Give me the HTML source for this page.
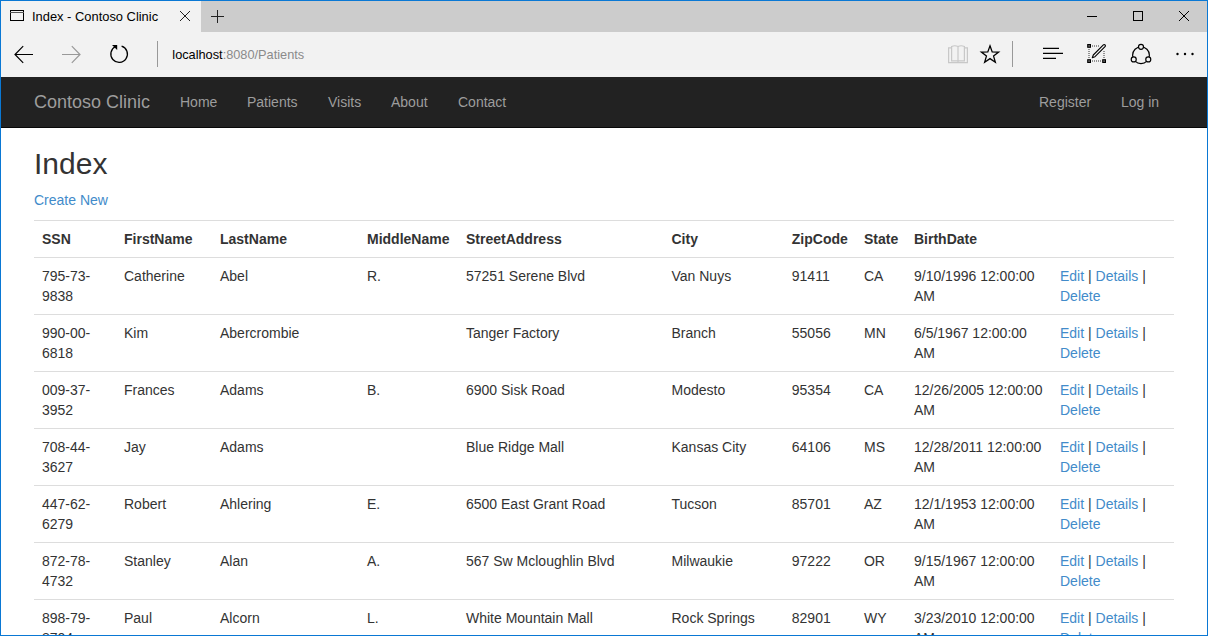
<!DOCTYPE html>
<html><head><meta charset="utf-8"><title>Index - Contoso Clinic</title>
<style>
html,body{margin:0;padding:0;width:1208px;height:636px;overflow:hidden;background:#fff;font-family:"Liberation Sans",sans-serif;}
.a{position:absolute;}
#frame{position:absolute;left:0;top:0;width:1206px;height:634px;border:1px solid #0A78D4;pointer-events:none;z-index:10}
#tabbar{left:1px;top:1px;width:1206px;height:31px;background:#CCCCCC}
#tab{left:1px;top:1px;width:200px;height:31px;background:#F2F2F2}
#addr{left:1px;top:32px;width:1206px;height:45px;background:#F2F2F2}
#nav{left:1px;top:77px;width:1206px;height:50px;background:#222;border-bottom:1px solid #080808}
.ui{font-size:12px;color:#000;white-space:nowrap}
.nl{font-size:14px;color:#9d9d9d;white-space:nowrap;line-height:20px}
#content{left:34px;top:127px;width:1140px;color:#333;font-size:14px;line-height:20px}
h2{position:absolute;left:0;top:20px;margin:0;font-size:30px;font-weight:500;line-height:33px;white-space:nowrap}
.create{position:absolute;left:0;top:63px;color:#428bca;text-decoration:none}
table{position:absolute;left:0;top:93px;border-collapse:collapse;border-spacing:0;table-layout:fixed;width:1140px}
td,th{padding:8px;border-top:1px solid #ddd;text-align:left;vertical-align:top;line-height:20px;white-space:nowrap;overflow:hidden}
th{font-weight:bold}
td a{color:#428bca;text-decoration:none}
</style></head>
<body>
<div id="tabbar" class="a"></div>
<div id="tab" class="a"></div>
<div id="addr" class="a"></div>
<div id="nav" class="a"></div>

<!-- tab contents -->
<svg class="a" style="left:0;top:0" width="1208" height="77" viewBox="0 0 1208 77">
  <!-- tab icon -->
  <rect x="10.5" y="10.5" width="13" height="10" fill="none" stroke="#000" stroke-width="1"/>
  <line x1="10" y1="12.5" x2="24" y2="12.5" stroke="#555" stroke-width="1"/>
  <!-- tab close -->
  <path d="M180 11 L190 21 M190 11 L180 21" stroke="#222" stroke-width="1" fill="none"/>
  <!-- new tab plus -->
  <path d="M217.5 10 V23 M211 16.5 H224" stroke="#222" stroke-width="1" fill="none"/>
  <!-- window controls -->
  <path d="M1087 16.5 H1097" stroke="#000" stroke-width="1"/>
  <rect x="1133.5" y="11.5" width="9" height="9" fill="none" stroke="#000" stroke-width="1"/>
  <path d="M1179 11 L1189 21 M1189 11 L1179 21" stroke="#000" stroke-width="1" fill="none"/>
  <!-- back -->
  <path d="M15 54.5 H33 M23.2 46.2 L15 54.5 L23.2 62.8" stroke="#000" stroke-width="1.2" fill="none"/>
  <!-- forward -->
  <path d="M62 54.5 H80 M71.8 46.2 L80 54.5 L71.8 62.8" stroke="#999" stroke-width="1.2" fill="none"/>
  <!-- refresh -->
  <path d="M121.6 46.1 A8.3 8.3 0 1 1 115.6 46.5" stroke="#000" stroke-width="1.3" fill="none"/>
  <path d="M112 45 L117.2 45 L117.2 50 Z" fill="#000"/>
  <!-- separators -->
  <path d="M157.5 41 V67" stroke="#999" stroke-width="1"/>
  <path d="M1012.5 41 V67" stroke="#999" stroke-width="1"/>
  <!-- reading view -->
  <g stroke="#C8C8C8" fill="none" stroke-width="1.2">
    <path d="M951 47.8 H948.6 V62.6 H967.4 V47.8 H965"/>
    <path d="M958 62.6 V46.5 Q955 45 951.6 46.5 V60.8 H958"/>
    <path d="M958 46.5 Q961 45 964.4 46.5 V60.8 H958"/>
  </g>
  <!-- star -->
  <path d="M990.00 45.80 L992.20 51.87 L998.65 52.09 L993.57 56.06 L995.35 62.26 L990.00 58.65 L984.65 62.26 L986.43 56.06 L981.35 52.09 L987.80 51.87 Z" stroke="#000" stroke-width="1.3" stroke-linejoin="miter" fill="none"/>
  <!-- hub -->
  <path d="M1043 48.4 H1059 M1043 53.4 H1063 M1043 58.4 H1056" stroke="#000" stroke-width="1.2"/>
  <!-- notes -->
  <g fill="#555" stroke="#000" stroke-width="1">
    <rect x="1087.7" y="44.5" width="2.8" height="2.8"/><rect x="1087.7" y="59.7" width="2.8" height="2.8"/><rect x="1102.7" y="59.7" width="2.8" height="2.8"/>
  </g>
  <path d="M1089 49 V58 M1092 46 H1099 M1092 61 H1101.5 M1104 51 V58" stroke="#333" stroke-width="1" stroke-dasharray="1 1" fill="none"/>
  <path d="M1092.30 57.70 L1094.99 56.71 L1105.05 46.65 A1.2 1.2 0 0 0 1103.35 44.95 L1093.29 55.01 Z" stroke="#000" stroke-width="1.1" stroke-linejoin="round" fill="none"/>
  <!-- share -->
  <g stroke="#000" stroke-width="1.2" fill="#F2F2F2">
    <circle cx="1141" cy="55.2" r="8.4" fill="none"/>
    <circle cx="1141" cy="46.8" r="2.5"/>
    <circle cx="1133.73" cy="59.4" r="2.5"/>
    <circle cx="1148.27" cy="59.4" r="2.5"/>
  </g>
  <!-- more -->
  <g fill="#000"><circle cx="1177.5" cy="54" r="1.2"/><circle cx="1185" cy="54" r="1.2"/><circle cx="1192.5" cy="54" r="1.2"/></g>
</svg>
<div class="a ui" style="left:32px;top:9px;font-size:12.9px;">Index - Contoso Clinic</div>
<div class="a ui" style="left:172.3px;top:47px;font-size:12.75px;">localhost<span style="color:#8a8a8a">:8080/Patients</span></div>

<!-- navbar -->
<div class="a nl" style="left:34px;top:92px;font-size:18px;">Contoso Clinic</div>
<div class="a nl" style="left:180px;top:92px;">Home</div>
<div class="a nl" style="left:247px;top:92px;">Patients</div>
<div class="a nl" style="left:328px;top:92px;">Visits</div>
<div class="a nl" style="left:391px;top:92px;">About</div>
<div class="a nl" style="left:458px;top:92px;">Contact</div>
<div class="a nl" style="left:1039px;top:92px;">Register</div>
<div class="a nl" style="left:1121px;top:92px;">Log in</div>

<div id="content" class="a">
<h2>Index</h2>
<a class="create" href="#">Create New</a>
<table>
<colgroup><col style="width:82px"><col style="width:96px"><col style="width:147px"><col style="width:99px"><col style="width:205.5px"><col style="width:120.3px"><col style="width:72.2px"><col style="width:50px"><col style="width:146px"><col style="width:122px"></colgroup>
<tr><th>SSN</th><th>FirstName</th><th>LastName</th><th>MiddleName</th><th>StreetAddress</th><th>City</th><th>ZipCode</th><th>State</th><th>BirthDate</th><th></th></tr>
<tr><td>795-73-<br>9838</td><td>Catherine</td><td>Abel</td><td>R.</td><td>57251 Serene Blvd</td><td>Van Nuys</td><td>91411</td><td>CA</td><td>9/10/1996 12:00:00<br>AM</td><td><a href="#">Edit</a> | <a href="#">Details</a> |<br><a href="#">Delete</a></td></tr>
<tr><td>990-00-<br>6818</td><td>Kim</td><td>Abercrombie</td><td></td><td>Tanger Factory</td><td>Branch</td><td>55056</td><td>MN</td><td>6/5/1967 12:00:00<br>AM</td><td><a href="#">Edit</a> | <a href="#">Details</a> |<br><a href="#">Delete</a></td></tr>
<tr><td>009-37-<br>3952</td><td>Frances</td><td>Adams</td><td>B.</td><td>6900 Sisk Road</td><td>Modesto</td><td>95354</td><td>CA</td><td>12/26/2005 12:00:00<br>AM</td><td><a href="#">Edit</a> | <a href="#">Details</a> |<br><a href="#">Delete</a></td></tr>
<tr><td>708-44-<br>3627</td><td>Jay</td><td>Adams</td><td></td><td>Blue Ridge Mall</td><td>Kansas City</td><td>64106</td><td>MS</td><td>12/28/2011 12:00:00<br>AM</td><td><a href="#">Edit</a> | <a href="#">Details</a> |<br><a href="#">Delete</a></td></tr>
<tr><td>447-62-<br>6279</td><td>Robert</td><td>Ahlering</td><td>E.</td><td>6500 East Grant Road</td><td>Tucson</td><td>85701</td><td>AZ</td><td>12/1/1953 12:00:00<br>AM</td><td><a href="#">Edit</a> | <a href="#">Details</a> |<br><a href="#">Delete</a></td></tr>
<tr><td>872-78-<br>4732</td><td>Stanley</td><td>Alan</td><td>A.</td><td>567 Sw Mcloughlin Blvd</td><td>Milwaukie</td><td>97222</td><td>OR</td><td>9/15/1967 12:00:00<br>AM</td><td><a href="#">Edit</a> | <a href="#">Details</a> |<br><a href="#">Delete</a></td></tr>
<tr><td>898-79-<br>8704</td><td>Paul</td><td>Alcorn</td><td>L.</td><td>White Mountain Mall</td><td>Rock Springs</td><td>82901</td><td>WY</td><td>3/23/2010 12:00:00<br>AM</td><td><a href="#">Edit</a> | <a href="#">Details</a> |<br><a href="#">Delete</a></td></tr>
</table>
</div>

<div id="frame"></div>
</body></html>
